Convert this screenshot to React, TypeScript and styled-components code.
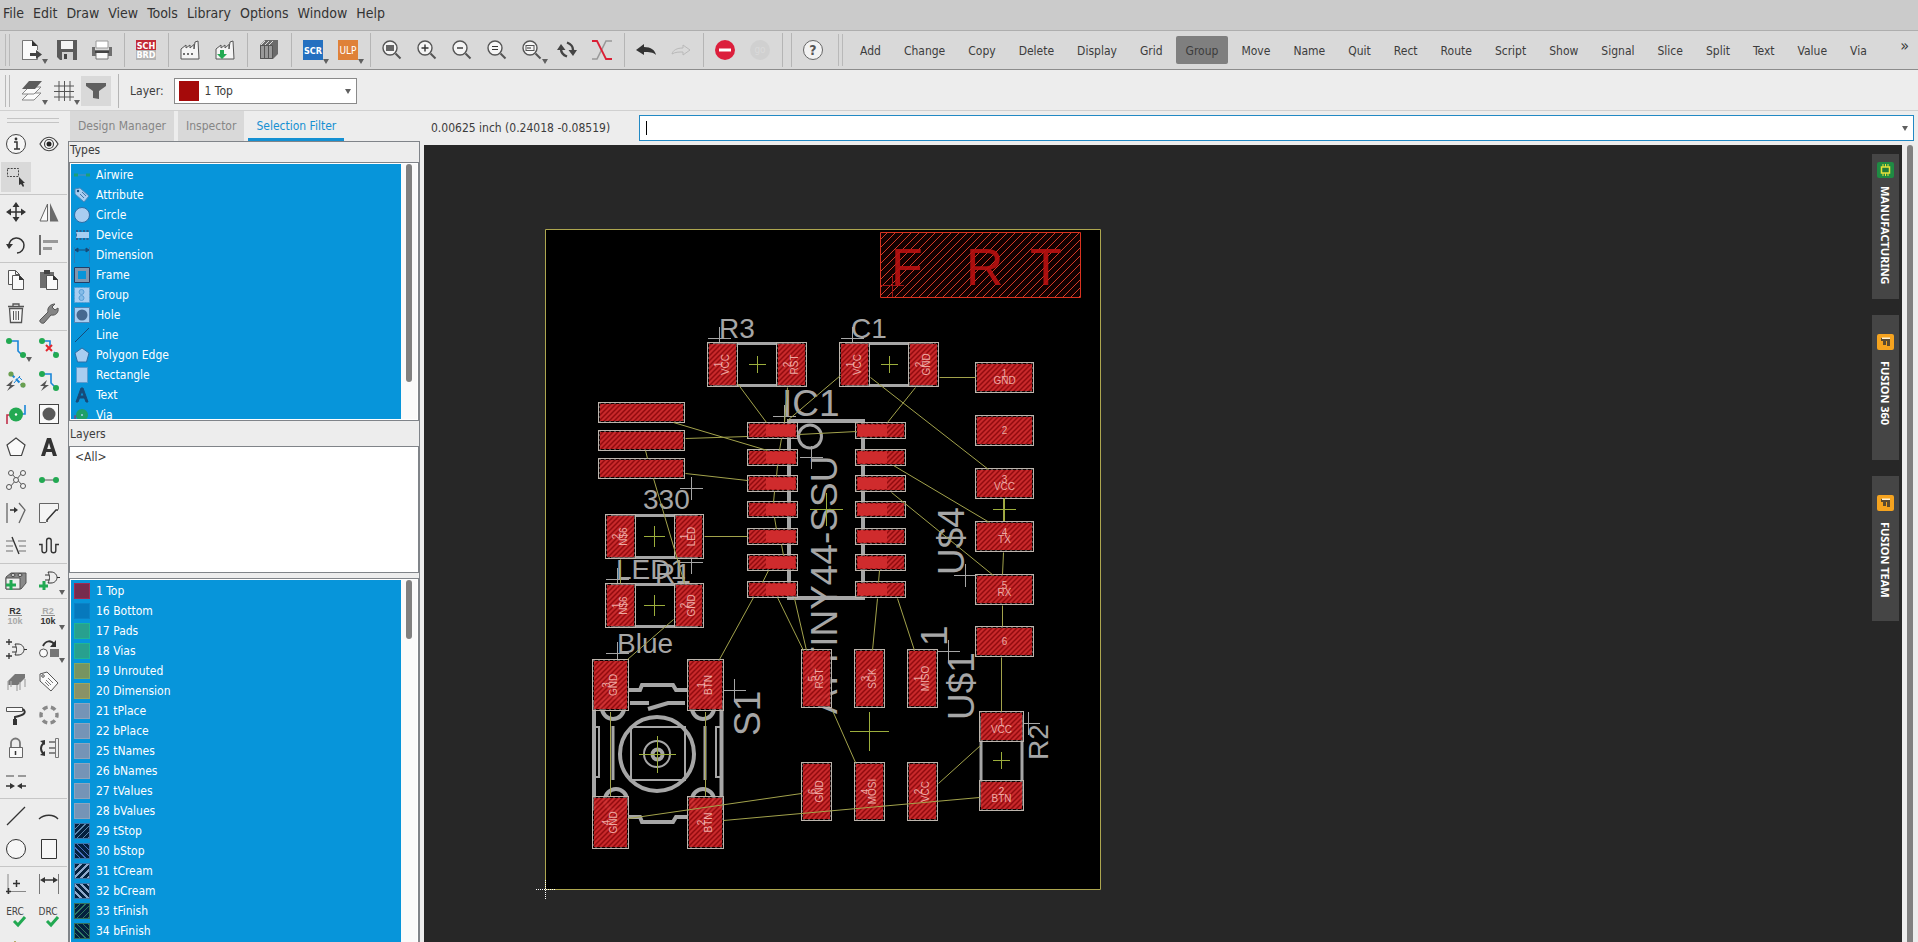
import React from "react";
import styled, { createGlobalStyle, css } from "styled-components";

const UI_FONT = '"DejaVu Sans Condensed", "Noto Sans", sans-serif';
const BOARD_FONT = '"Liberation Sans", Arial, sans-serif';

const GlobalStyle = createGlobalStyle`
  *, *::before, *::after { box-sizing: border-box; }
  body {
    margin: 0;
    background: #ededed;
    color: #3c3c3c;
    font: 12px/20px ${UI_FONT};
  }
  button, input, select { font: inherit; color: inherit; }
`;

/* ---------- shell ---------- */

const Shell = styled.div`
  display: flex;
  flex-direction: column;
  height: 100vh;
  overflow: hidden;
`;

const MenuBar = styled.nav`
  flex: none;
  height: 31px;
  padding: 0 0 4px;
  display: flex;
  background: #cbcbcb;
  border-bottom: 1px solid #aeaeae;
`;

const MenuItem = styled.button`
  border: 0;
  background: none;
  padding: 0 6px 0 3px;
  font-size: 14px;
  line-height: 26px;
  color: #333;
`;

const Toolbar = styled.div<{ $light?: boolean }>`
  flex: none;
  display: flex;
  align-items: center;
  height: ${(p) => (p.$light ? 41 : 39)}px;
  padding-top: ${(p) => (p.$light ? 2 : 0)}px;
  background: ${(p) => (p.$light ? "#ededed" : "#d9d9d9")};
  border-bottom: 1px solid ${(p) => (p.$light ? "#d0d0d0" : "#8c8c8c")};
`;

const Grip = styled.div<{ $wide?: boolean }>`
  flex: none;
  width: 5px;
  height: 32px;
  margin: 0 ${(p) => (p.$wide ? 7 : 12)}px 0 ${(p) => (p.$wide ? 15 : 5)}px;
  border: solid #b9b9b9;
  border-width: 0 1px;
`;

const ToolGroup = styled.div<{ $last?: boolean; $tight?: boolean }>`
  flex: none;
  display: flex;
  align-items: center;
  gap: ${(p) => (p.$tight ? 12 : 15)}px;
  height: 34px;
  padding-right: 12px;
  margin-right: ${(p) => (p.$last ? 8 : 11)}px;
  border-right: 1px solid #b5b5b5;
`;

const Divider = styled.div`
  flex: none;
  width: 1px;
  height: 34px;
  margin-right: 11px;
  background: #b5b5b5;
`;

const IconButton = styled.button<{ $pressed?: boolean }>`
  position: relative;
  flex: none;
  width: 20px;
  height: 20px;
  padding: 0;
  border: 0;
  background: none;
  color: #444;
  svg { display: block; overflow: visible; }
  ${(p) =>
    p.$pressed &&
    css`
      box-shadow: 0 0 0 5px #d9d9d9;
      background: #d9d9d9;
    `}
`;

const Caret = styled.i<{ $inline?: boolean }>`
  border: solid transparent;
  border-width: 5px 3px 0;
  border-top-color: #606060;
  ${(p) =>
    p.$inline
      ? css`flex: none; margin-right: 5px;`
      : css`position: absolute; right: -6px; bottom: -4px;`}
`;

const CommandRow = styled.div`
  flex: 1;
  min-width: 0;
  display: flex;
  gap: 3px;
  overflow: hidden;
`;

const Command = styled.button<{ $active?: boolean }>`
  flex: none;
  height: 28px;
  padding: 1px 10px 0;
  border: 0;
  border-radius: 2px;
  background: ${(p) => (p.$active ? "#7f7f7f" : "none")};
`;

const More = styled.button`
  align-self: flex-start;
  border: 0;
  background: none;
  padding: 5px 9px;
  font-size: 16px;
`;

const LayerLabel = styled.label`
  display: flex;
  align-items: center;
  gap: 10px;
`;

const LayerBox = styled.span`
  display: flex;
  align-items: center;
  width: 183px;
  height: 26px;
  padding-left: 4px;
  border: 1px solid #8a8a8a;
  background: #fff;
`;

const LayerSwatch = styled.span`
  width: 20px;
  height: 20px;
  background: #a50a0a;
`;

const LayerSelect = styled.select`
  flex: 1;
  appearance: none;
  border: 0;
  padding: 0 6px;
  background: none;
  outline: 0;
`;

/* ---------- workspace ---------- */

const Workspace = styled.div`
  flex: 1;
  min-height: 0;
  display: flex;
`;

const Rail = styled.div`
  flex: none;
  width: 67px;
  overflow: hidden;
`;

const RailGrip = styled.div`
  height: 5px;
  margin: 7px 8px 4px 7px;
  border: solid #c4c4c4;
  border-width: 1px 0;
`;

const RailRow = styled.div<{ $ruled?: boolean }>`
  display: flex;
  align-items: center;
  gap: 13px;
  height: ${(p) => (p.$ruled ? 35 : 33)}px;
  padding-left: 6px;
  ${(p) => p.$ruled && css`border-bottom: 1px solid #c6c6c6; padding-bottom: 1px;`}
`;

const Side = styled.section`
  flex: none;
  width: 352px;
  margin-left: 1px;
  display: flex;
  flex-direction: column;
`;

const TabList = styled.div`
  display: flex;
  gap: 4px;
  height: 30px;
  padding-left: 2px;
`;

const Tab = styled.button<{ $on?: boolean }>`
  border: 0;
  padding: 2px 8px 0;
  background: ${(p) => (p.$on ? "none" : "#d9d9d9")};
  color: ${(p) => (p.$on ? "#1590d2" : "#868686")};
  border-bottom: 3px solid ${(p) => (p.$on ? "#1590d2" : "#d9d9d9")};
`;

const Pane = styled.div`
  flex: 1;
  min-height: 0;
  display: flex;
  flex-direction: column;
  border: 1px solid #808489;
  border-bottom: 0;
`;

const PaneTitle = styled.h2<{ $tall?: boolean }>`
  flex: none;
  margin: 0;
  height: ${(p) => (p.$tall ? 25 : 20)}px;
  padding: 0 1px;
  font-size: 12px;
  font-weight: 400;
  line-height: ${(p) => (p.$tall ? 26 : 16)}px;
`;

const ListFrame = styled.div<{ $size?: number }>`
  flex: ${(p) => (p.$size ? "none" : "1")};
  height: ${(p) => (p.$size ? p.$size + "px" : "auto")};
  min-height: 0;
  display: flex;
  background: #fff;
  border: 1px solid #808489;
  padding: 1px;
  overflow: hidden;
  ${(p) => !p.$size && css`border-bottom: 0; padding-bottom: 0;`}
`;

const List = styled.ul`
  flex: 1;
  margin: 0;
  padding: 0;
  list-style: none;
  background: #0795da;
  color: #fff;
  overflow: hidden;
`;

const ListItem = styled.li`
  display: flex;
  align-items: center;
  gap: 6px;
  height: 20px;
  padding: 1px 0 0 3px;
`;

const PlainItem = styled.div`
  padding: 0 4px;
  line-height: 18px;
`;

const Track = styled.div`
  flex: none;
  width: 16px;
  padding-left: 5px;
  background: #fafafa;
`;

const Thumb = styled.div<{ $size: number }>`
  width: 6px;
  height: ${(p) => p.$size}px;
  border-radius: 3px;
  background: #808080;
`;

const Swatch = styled.span<{ $fill: string; $edge: string; $hatch?: string; $lean?: number; $line?: number }>`
  width: 16px;
  height: 16px;
  border: 1px solid ${(p) => p.$edge};
  background: ${(p) =>
    p.$hatch
      ? `repeating-linear-gradient(${p.$lean}deg, ${p.$fill} 0 3px, ${p.$hatch} 3px ${3 + (p.$line || 1)}px)`
      : p.$fill};
`;

const Gap = styled.div`
  flex: none;
  height: 5px;
`;

const Editor = styled.main`
  flex: 1;
  min-width: 0;
  margin-left: 4px;
  display: flex;
  flex-direction: column;
`;

const CommandLine = styled.div`
  flex: none;
  display: flex;
  align-items: center;
  height: 34px;
  padding: 0 4px 0 7px;
`;

const Coordinates = styled.output`
  flex: none;
  width: 208px;
`;

const CommandBox = styled.label`
  flex: 1;
  display: flex;
  align-items: center;
  height: 26px;
  padding-left: 6px;
  background: #fff;
  border: 1px solid #2289c4;
`;

const TextCursor = styled.i`
  width: 1px;
  height: 14px;
  background: #000;
`;

const CommandInput = styled.input`
  flex: 1;
  border: 0;
  outline: 0;
  background: none;
`;

const Stage = styled.div`
  flex: 1;
  min-height: 0;
  display: flex;
`;

const Canvas = styled.div`
  flex: 1;
  min-width: 0;
  display: flex;
  background: #272727;
`;

const BoardView = styled.div`
  flex: 1;
  min-width: 0;
  overflow: hidden;
  svg { display: block; width: 100%; height: 100%; }
`;

const Dock = styled.div`
  flex: none;
  width: 30px;
  padding: 9px 3px 0 0;
  display: flex;
  flex-direction: column;
  gap: 16px;
`;

const DockTab = styled.button<{ $long?: boolean }>`
  display: flex;
  align-items: center;
  gap: ${(p) => (p.$long ? 8 : 11)}px;
  height: 145px;
  width: 27px;
  padding: ${(p) => (p.$long ? 8 : 19)}px 0 0;
  border: 0;
  writing-mode: vertical-rl;
  background: #454545;
  color: #fff;
  font: 700 11px/27px "Noto Sans", sans-serif;
`;

const CanvasTrack = styled.div`
  flex: none;
  width: 16px;
  display: flex;
  justify-content: center;
`;

const CanvasThumb = styled.div`
  width: 6px;
  border-radius: 3px 3px 0 0;
  background: #808080;
`;

/* ---------- icons (20 x 20) ---------- */

const G = "#22a952";
const B = "#1a86d8";
const K = "#333";
const M = "#8c8c8c";

const lens = (inner: React.ReactNode) => (
  <>
    <circle cx="8" cy="8" r="7" fill="#f5f5f5" stroke="#555" strokeWidth="1.4" />
    <path d="M13.5 13.5 18.5 18.5" stroke="#555" strokeWidth="2" />
    {inner}
  </>
);
const factory = (
  <path d="M1 19V9l5-4v3l4-3v3l4-3.500V9L15 2l3-1 1 18Z" fill="#f4f4f4" stroke="#555" />
);
const gate = (x: number, y: number) => (
  <g transform={`translate(${x} ${y})`} fill="none" stroke={K}>
    <path d="M3 0h3c4 0 6 3 6 5.500s-2 5.500-6 5.500H3c2-4 2-7 0-11ZM0 3h4M0 8h4M12 5.500h3" />
  </g>
);
const sheet = (x: number, y: number) => (
  <path transform={`translate(${x} ${y})`} d="M.5.5h7l4 4v10H.5ZM7.500.5v4h4" fill="#fafafa" stroke="#555" />
);
const via = (
  <>
    <path d="M1 20V11h6" fill="none" stroke="#c0304a" strokeWidth="1.6" />
    <path d="M14 10h5V1" fill="none" stroke={B} strokeWidth="1.6" />
    <circle cx="10" cy="10.500" r="7" fill={G} />
    <circle cx="10" cy="10.500" r="1.200" fill="#fff" />
  </>
);
const tag = (
  <path d="M1 2 8 0 19 11 12 19 1 9Z" fill="#fafafa" stroke="#555" />
);
const small = (a: string, b: string, ca: string, cb: string) => (
  <g fontFamily={BOARD_FONT} fontWeight="700" fontSize="9" textAnchor="middle">
    <text x="9" y="8" fill={ca}>{a}</text>
    <text x="9" y="18" fill={cb}>{b}</text>
    <path d="M2 9.500h14" stroke={M} />
  </g>
);
const check = (label: string) => (
  <>
    <text x="9" y="8" fontFamily={UI_FONT} fontSize="10" textAnchor="middle" fill="#444">{label}</text>
    <path d="m8 14 4 4 7-8" fill="none" stroke={G} strokeWidth="3" />
  </>
);

const icons: Record<string, React.ReactNode> = {
  open: (
    <>
      <path d="M.5.5h10l5 5V20H.5Z" fill="#fafafa" />
      <path d="M.5 20V.5h10M15.500 10V6M.5 19.500h15V17" fill="none" stroke="#777" />
      <path d="M10 0v6h6Z" fill={K} />
      <path d="M8 13h6v-3l6 4.500-6 4.500v-3H8Z" fill="#444" />
    </>
  ),
  save: (
    <>
      <path d="M0 0h20v20H3l-3-3Z" fill="#5a5a5a" />
      <path d="M4 1h12v8H4Z" fill="#f4f4f4" />
      <path d="M5 12h11v8H5Z" fill="#d0d0d0" />
      <path d="M7 14h3v5H7Z" fill="#444" />
    </>
  ),
  print: (
    <>
      <path d="M4 1h12v7H4Z" fill="#fff" stroke="#999" />
      <path d="M0 7h3v3h14V7h3v9H0Z" fill="#6f6f6f" />
      <path d="M4 12h12v7H4Z" fill="#fafafa" stroke="#777" />
      <path d="M3 11h14v2H3Z" fill="#444" />
    </>
  ),
  schbrd: (
    <>
      <path d="M0 0h20v10H0Z" fill="#c22a36" />
      <path d="M0 10h20v10H0Z" fill="#b3b3b3" />
      <g fontFamily={UI_FONT} fontWeight="700" fontSize="9" fill="#fff" textAnchor="middle">
        <text x="10" y="9">SCH</text>
        <text x="10" y="18">BRD</text>
      </g>
    </>
  ),
  cam: <>{factory}<path d="M3 14h2m2 0h2m2 0h2" stroke="#444" strokeWidth="1.500" /></>,
  camOut: <>{factory}<path d="M5 10h4v4h3l-5 5-5-5h3Z" fill={G} /></>,
  library: (
    <>
      <path d="M1 5 6 0h13v14l-5 5H1Z" fill="#6a6a6a" />
      <path d="M1.500 5.500h4v13h-4ZM5.500 5.500h4v13h-4ZM9.500 5.500h4v13h-4Z" fill="#999" stroke="#555" />
      <path d="m2 5 4-4m0 4 4-4m0 4 4-4" stroke="#ddd" />
    </>
  ),
  scr: (
    <>
      <path d="M0 0h20v20H0Z" fill="#2470c0" />
      <text x="10" y="14" fontFamily={UI_FONT} fontWeight="700" fontSize="9" fill="#fff" textAnchor="middle">SCR</text>
    </>
  ),
  ulp: (
    <>
      <path d="M0 0h20v20H0Z" fill="#df8138" />
      <text x="10" y="14" fontFamily={UI_FONT} fontSize="10" fill="#fff" textAnchor="middle">ULP</text>
    </>
  ),
  zoomFit: lens(<rect x="4" y="5" width="8" height="6" fill="#666" />),
  zoomIn: lens(<path d="M4.500 8h7M8 4.500v7" stroke={K} strokeWidth="1.400" />),
  zoomOut: lens(<path d="M5 8h6" stroke={K} strokeWidth="1.400" />),
  redraw: lens(<path d="M5 6.500h6M5 9.500h6" stroke={K} strokeWidth="1.200" />),
  zoomSelect: lens(<><rect x="4" y="5.500" width="8" height="5" fill="none" stroke="#555" /><path d="M5 8h4" stroke={K} /></>),
  refresh: (
    <>
      <path d="M4 9c0 4 2 6 6 7.500M16 10c0-4-2-6-6-7.500" fill="none" stroke="#444" strokeWidth="2.400" />
      <path d="M0 10l4-6 4.500 6ZM11.500 10H20l-4 6Z" fill="#444" />
    </>
  ),
  ratsnest: (
    <>
      <path d="M0 19h5l9-18h6" fill="none" stroke="#999" strokeWidth="1.600" />
      <path d="M0 1h5l9 18h6" fill="none" stroke="#da1f35" strokeWidth="1.800" />
    </>
  ),
  undo: <path d="M0 10 8 4v3c7 0 11 3 12 8-3-3-7-3-12-3v3Z" fill={K} />,
  redo: <path d="M19 10 12 5v3C6 8 2 10 1 14c3-2 7-2 11-2v3Z" fill="none" stroke="#b9b9b9" />,
  stop: <><circle cx="10" cy="10" r="10" fill="#dc1f3c" /><path d="M4 10h12" stroke="#fff" strokeWidth="3" /></>,
  go: (
    <>
      <circle cx="10" cy="10" r="10" fill="#d0d0d0" />
      <text x="10" y="13" fontFamily={UI_FONT} fontSize="10" fill="#dadada" textAnchor="middle">go</text>
    </>
  ),
  help: (
    <>
      <circle cx="10" cy="10" r="9.500" fill="#f2f2f2" stroke="#666" />
      <text x="10" y="15" fontFamily={UI_FONT} fontWeight="700" fontSize="14" fill="#555" textAnchor="middle">?</text>
    </>
  ),
  layers: (
    <>
      <path d="M0 19 7 12h12l-7 7Z" fill="#fafafa" stroke="#888" />
      <path d="m0 13 7-7h12l-7 7Z" fill="#fafafa" stroke="#888" />
      <path d="m0 8 7-8h13l-7 8Z" fill="#5c5c5c" />
    </>
  ),
  grid: <path d="M5 0v20M10.500 0v20M16 0v20M0 5h20M0 10.500h20M0 16h20" stroke="#555" />,
  filter: <path d="M0 2h20v3l-7 5v8l-6-1v-7L0 5Z" fill="#606060" />,

  info: (
    <>
      <circle cx="10" cy="10" r="9.500" fill="#f6f6f6" stroke="#444" />
      <path d="M8 8h3v7m-3 0h6" fill="none" stroke={K} strokeWidth="1.500" />
      <circle cx="10" cy="5" r="1.400" fill={K} />
    </>
  ),
  show: (
    <>
      <path d="M1 10c5-9 13-9 18 0-5 9-13 9-18 0Z" fill="#f6f6f6" stroke="#444" strokeWidth="1.200" />
      <circle cx="10" cy="10" r="4.500" fill="none" stroke="#444" strokeWidth="1.200" />
      <circle cx="10" cy="10" r="2.500" fill="#222" />
    </>
  ),
  group: (
    <>
      <rect x="1.500" y="1.500" width="11" height="8" fill="none" stroke="#444" strokeDasharray="2 1.200" />
      <path d="M13 10v8l2-1 2 3 1-1-1-3h2Z" fill={K} />
    </>
  ),
  move: (
    <>
      <path d="M10 3v14M3 10h14" stroke={K} strokeWidth="1.500" />
      <path d="M10 0 6.500 5h7ZM10 20l-3.500-5h7ZM0 10l5-3.500v7ZM20 10l-5-3.500v7Z" fill={K} />
    </>
  ),
  mirror: (
    <>
      <path d="M8.500 2v17H1Z" fill="#fafafa" stroke="#666" />
      <path d="M11 1v18.500h8.500Z" fill="#6a6a6a" />
    </>
  ),
  rotate: (
    <>
      <path d="M3 11a7.500 7.500 0 1 1 8 7" fill="none" stroke={K} strokeWidth="1.500" />
      <path d="M0 9h7l-4 5Z" fill={K} />
    </>
  ),
  align: (
    <>
      <path d="M1 0v20" stroke="#444" strokeWidth="1.500" />
      <path d="M4 5h15v3H4ZM4 12h9v3H4Z" fill="#999" />
    </>
  ),
  copy: <>{sheet(2, 0)}{sheet(6, 5)}<path d="M13 5v5h5Z" fill={K} /></>,
  paste: (
    <>
      <path d="M1 2h14v16H1Z" fill="#6e6e6e" />
      <path d="M5 0h6v4H5Z" fill="#444" />
      {sheet(7, 5)}
      <path d="M14 5v5h5Z" fill={K} />
    </>
  ),
  trash: (
    <>
      <path d="M3.500 5.500h13l-1 14h-11ZM7 3V1h6v2M2 3.500h16" fill="#f4f4f4" stroke="#555" strokeWidth="1.300" />
      <path d="M7.500 8v9M10 8v9M12.500 8v9" stroke="#555" />
    </>
  ),
  wrench: <path d="M1 17 9 9c-1-4 2-8 7-8l-3 3 3 3 3-2c1 4-2 8-7 7l-7 8c-2 1-5-1-4-3Z" fill="#858585" stroke="#555" />,
  route: (
    <>
      <path d="M3 3h9v10l5 5" fill="none" stroke={B} strokeWidth="1.600" />
      <circle cx="3" cy="3" r="3" fill={G} /><circle cx="17" cy="17" r="3" fill={G} />
    </>
  ),
  ripup: (
    <>
      <path d="M3 3h8v5m4 6 3 3" fill="none" stroke={B} strokeWidth="1.600" />
      <circle cx="3" cy="3" r="3" fill={G} /><circle cx="17" cy="17" r="3" fill={G} />
      <path d="m7 7 6 6m0-6-6 6" stroke="#e2262e" strokeWidth="2" />
    </>
  ),
  fanout: (
    <>
      <path d="M5 3 18 16" stroke={B} strokeDasharray="5 2" strokeWidth="2" />
      <path d="m14 5-6 7m5-6 3 3" stroke={B} />
      <circle cx="5" cy="3" r="2.600" fill="#6a9f50" /><circle cx="17" cy="14" r="2.600" fill="#6a9f50" />
      <path d="M7 9 0 15h4l-3 5 8-6H5Z" fill="#555" />
    </>
  ),
  autoroute: (
    <>
      <path d="M3 3h9v9l5 5" fill="none" stroke={B} strokeWidth="1.600" />
      <circle cx="3" cy="3" r="3" fill={G} /><circle cx="17" cy="17" r="3" fill={G} />
      <path d="M8 9 1 15h4l-3 5 8-6H6Z" fill="#555" />
    </>
  ),
  via,
  hole: <><rect x=".5" y=".5" width="19" height="19" fill="#fafafa" stroke="#444" /><circle cx="10" cy="10" r="6.500" fill="#5a5a5a" /></>,
  polygon: <path d="M10 1 19 8 15.500 18.500H4.500L1 8Z" fill="#fafafa" stroke="#444" strokeWidth="1.200" />,
  text: <path d="M2 19 8 1h4l6 18h-4l-1.200-4H7.200L6 19Zm6.200-7h3.600L10 6Z" fill={K} fillRule="evenodd" />,
  net: (
    <>
      <path d="m5 3 12 13M16 3 4 17" stroke="#555" />
      <g fill="#f4f4f4" stroke="#555"><circle cx="5" cy="3" r="2.500" /><circle cx="17" cy="3" r="2.500" /><circle cx="3" cy="17" r="2.500" /><circle cx="17" cy="16" r="2.500" /><circle cx="10" cy="10" r="2.500" /></g>
    </>
  ),
  airwire: (
    <>
      <path d="M3 10h14" stroke="#888" strokeWidth="1.500" />
      <circle cx="3" cy="10" r="3" fill={G} /><circle cx="17" cy="10" r="3" fill={G} />
    </>
  ),
  split: (
    <>
      <path d="M1 0v20M13 0l6 7-6 13" fill="none" stroke="#666" strokeWidth="1.300" />
      <path d="M4 7h5" stroke={K} strokeWidth="1.500" /><path d="M8 4v6l4-3Z" fill={K} />
    </>
  ),
  miter: (
    <>
      <path d="M7 19.500H.5V.5h19v6" fill="#f4f4f4" stroke="#666" />
      <path d="M19 7h-2L8 17v2" fill="none" stroke={K} strokeWidth="1.500" />
    </>
  ),
  slice: (
    <>
      <path d="M0 5h7m5 0h8M0 10h7m6 0h7M0 15h7m6 0h7" stroke="#999" strokeWidth="1.300" />
      <path d="m6 1 7 17" stroke={K} strokeWidth="1.400" />
    </>
  ),
  meander: <path d="M0 8.500h3v6a2.300 2.300 0 0 0 4.600 0v-10a2.200 2.200 0 0 1 4.600 0v10a2.300 2.300 0 0 0 4.600 0v-6H20" fill="none" stroke={K} strokeWidth="1.400" />,
  addPart: (
    <>
      <path d="M0 6 5 2h15v10l-5 6H0Z" fill="#8a8a8a" stroke="#555" />
      <path d="M0 7h14v11H0Z" fill="#eee" stroke="#555" />
      <g fill="#ddd" stroke="#444"><ellipse cx="7" cy="4" rx="2" ry="1.500" /><ellipse cx="14" cy="4" rx="2" ry="1.500" /></g>
      <path d="M5 9v10M0 14h10" stroke={G} strokeWidth="3" />
    </>
  ),
  addGate: <>{gate(6, 1)}<path d="M5 10v9M0 15h9" stroke={G} strokeWidth="3" /></>,
  name: small("R2", "10k", K, "#aaa"),
  value: small("R2", "10k", "#aaa", K),
  invoke: <>{gate(6, 5)}<path d="M3 0v6M0 3h6M3 14v6M0 17h6" stroke={K} strokeWidth="1.300" /></>,
  replace: (
    <>
      <circle cx="4.500" cy="14" r="4" fill="#fafafa" stroke="#555" />
      <path d="M11 10h9v8h-9Z" fill="#777" />
      <path d="M4 7c3-6 8-6 12-1" fill="none" stroke={K} strokeWidth="2" /><path d="m17 1 0 7h-6Z" fill={K} />
    </>
  ),
  array: (
    <>
      <path d="M2 9 9 2h10v4l-7 7H2Z" fill="#777" />
      <path d="M2 9v9m3-9v6m6-2v6m3-9v8m5-11v8" stroke="#aaa" strokeWidth="1.300" />
    </>
  ),
  attribute: <>{tag}<circle cx="4" cy="4" r="1.300" fill="none" stroke="#555" /><path d="m7 8 5 5M9 6l5 5m-8-1 4 4" stroke="#777" /></>,
  paint: (
    <>
      <path d="M.5 2.500h16v4H.5Z" fill="#fafafa" stroke="#555" />
      <path d="M17 4c4 4 1 6-8 8v2" fill="none" stroke={K} strokeWidth="2" />
      <path d="M7 14h4v6H7Z" fill={K} />
    </>
  ),
  ring: <circle cx="10" cy="10" r="8" fill="none" stroke="#888" strokeWidth="3.400" strokeDasharray="5 3.380" strokeDashoffset="2.500" />,
  lock: (
    <>
      <path d="M5 9V5a4.500 4.500 0 0 1 9 0v4" fill="none" stroke="#777" strokeWidth="1.800" />
      <path d="M3.500 9.500h13v10h-13Z" fill="#f8f8f8" stroke="#666" /><path d="M9.500 13v4" stroke={K} strokeWidth="1.500" />
    </>
  ),
  swap: (
    <>
      <path d="M5 5c-4 3-4 8 0 11" fill="none" stroke={K} strokeWidth="2" />
      <path d="M1 3 6 2v5ZM1 17l5 1v-5Z" fill={K} />
      <path d="M16.500.5h3v19h-3Z" fill="#eee" stroke="#777" /><path d="M10 4h6m-6 6h6m-6 5h6" stroke="#666" strokeWidth="1.500" />
    </>
  ),
  optimize: (
    <>
      <path d="M0 5h8m4 0h8" stroke="#999" strokeWidth="2" />
      <path d="M0 15h5m15 0h-5" stroke={K} strokeWidth="1.500" /><path d="m4 12 5 3-5 3Zm12 0-5 3 5 3Z" fill={K} />
    </>
  ),
  line: <path d="M1 19 19 1" stroke={K} strokeWidth="1.300" />,
  arc: <path d="M0 13c5-5 15-5 19 0" fill="none" stroke={K} strokeWidth="1.300" />,
  circle: <circle cx="10" cy="10" r="9.500" fill="#f6f6f6" stroke={K} />,
  rect: <path d="M2.500.5h15v19h-15Z" fill="#f6f6f6" stroke={K} />,
  mark: (
    <>
      <path d="M2 0v20M0 17.500h20" stroke="#888" /><path d="M10.500 6v7M7 9.500h7M2.500 14v6M0 17.500h5" stroke={K} strokeWidth="1.500" />
    </>
  ),
  dimension: (
    <>
      <path d="M.5 0v20M19.500 0v20" stroke="#777" /><path d="M3 6h14" stroke={K} strokeWidth="1.500" />
      <path d="m1 6 5-3v6Zm18 0-5-3v6Z" fill={K} />
    </>
  ),
  erc: check("ERC"),
  drc: check("DRC"),
  errors: <path d="m9 1 9 17H0Z" fill="#e8dc9a" stroke="#a89a50" />,
};

const Icon = ({ name }: { name: string }) => (
  <svg width="20" height="20" viewBox="0 0 20 20" aria-hidden="true">{icons[name]}</svg>
);

type ToolProps = { name: string; label: string; menu?: boolean; pressed?: boolean };
const Tool = ({ name, label, menu, pressed }: ToolProps) => (
  <IconButton aria-label={label} $pressed={pressed}>
    <Icon name={name} />
    {menu && <Caret />}
  </IconButton>
);

/* icons of the type list (16 x 16), tinted by the selection */
const L = "#a9cdf0";
const D = "#174a78";
const typeIcons: Record<string, React.ReactNode> = {
  Airwire: <><path d="M2 8h12" stroke="#3f8fc0" strokeWidth="1.500" /><path d="M0 8h4M12 8h4" stroke="#1b9f78" strokeWidth="3" /></>,
  Attribute: <><path d="M1 2 6 1 15 9l-5 6L1 7Z" fill={L} stroke="#4a88bb" /><circle cx="4" cy="4" r="1.200" fill={D} /><path d="m6 7 4 4M8 5l4 4" stroke="#4477a5" /></>,
  Circle: <circle cx="8" cy="8" r="7.500" fill={L} stroke="#2b6ea6" />,
  Device: <><path d="M3 3v10M6.500 3v10M10 3v10M13.500 3v10" stroke="#2b5f90" strokeWidth="2" /><path d="M2 5h13v6H2l1-3Z" fill={L} /></>,
  Dimension: <><path d="M.5 0v16M15.500 0v16" stroke="#2b7cb5" /><path d="M3 3h10M1 3l3-2v4Zm14 0-3-2v4Z" fill={D} stroke={D} /></>,
  Frame: <><path d="M2 2h12v12H2Z" fill="none" stroke="#8296ae" strokeWidth="4" /><path d="M.5.5h15v15H.5Z" fill="none" stroke="#223e66" /></>,
  Group: <><path d="M.5.5h15v15H.5Z" fill={L} stroke="#5a9cd0" strokeDasharray="2 1" /><circle cx="7.500" cy="5" r="2.500" fill="#86bce8" stroke="#5a9fd6" /><circle cx="7.500" cy="11" r="2.500" fill="#86bce8" stroke="#5a9fd6" /></>,
  Hole: <><path d="M.5.5h15v15H.5Z" fill={L} stroke="#4e83b4" /><circle cx="8" cy="8" r="5.500" fill="#46688f" /></>,
  Line: <path d="M1 15 15 1" stroke={D} />,
  "Polygon Edge": <path d="m8 1 7 5-2.500 9h-9L1 6Z" fill={L} stroke="#2b6ea6" />,
  Rectangle: <path d="M2.500.5h11v15h-11Z" fill={L} stroke="#5a9cd0" />,
  Text: <path d="M2 15 7 1h2l5 14h-2l-1.500-4h-5L4 15Zm4-6h4L8 4Z" fill={D} fillRule="evenodd" stroke={D} />,
  Via: <><path d="M1 16V9h4" fill="none" stroke="#7b4a80" strokeWidth="1.500" /><circle cx="8" cy="8" r="6" fill="#1f9f68" /><circle cx="8" cy="8" r="1" fill={L} /></>,
};

/* ---------- data ---------- */

const menus = ["File", "Edit", "Draw", "View", "Tools", "Library", "Options", "Window", "Help"];

const toolGroups: ToolProps[][] = [
  [
    { name: "open", label: "Open", menu: true },
    { name: "save", label: "Save" },
    { name: "print", label: "Print" },
  ],
  [{ name: "schbrd", label: "Switch to schematic" }],
  [
    { name: "cam", label: "CAM processor" },
    { name: "camOut", label: "Export manufacturing data" },
  ],
  [{ name: "library", label: "Library manager" }],
  [
    { name: "scr", label: "Run script", menu: true },
    { name: "ulp", label: "Run ULP", menu: true },
  ],
  [
    { name: "zoomFit", label: "Zoom to fit" },
    { name: "zoomIn", label: "Zoom in" },
    { name: "zoomOut", label: "Zoom out" },
    { name: "redraw", label: "Redraw" },
    { name: "zoomSelect", label: "Zoom to selection", menu: true },
    { name: "refresh", label: "Refresh" },
    { name: "ratsnest", label: "Ratsnest" },
  ],
  [
    { name: "undo", label: "Undo" },
    { name: "redo", label: "Redo" },
  ],
  [
    { name: "stop", label: "Stop" },
    { name: "go", label: "Go" },
  ],
];

const commands = [
  "Add", "Change", "Copy", "Delete", "Display", "Grid", "Group", "Move", "Name", "Quit", "Rect",
  "Route", "Script", "Show", "Signal", "Slice", "Split", "Text", "Value", "Via",
];

type RailLine = { tools: string[]; ruled?: boolean; menus?: string[] };
const rail: RailLine[] = [
  { tools: ["info", "show"] },
  { tools: ["group"], ruled: true },
  { tools: ["move", "mirror"] },
  { tools: ["rotate", "align"], ruled: true },
  { tools: ["copy", "paste"] },
  { tools: ["trash", "wrench"], ruled: true },
  { tools: ["route", "ripup"], menus: ["route"] },
  { tools: ["fanout", "autoroute"] },
  { tools: ["via", "hole"] },
  { tools: ["polygon", "text"] },
  { tools: ["net", "airwire"] },
  { tools: ["split", "miter"] },
  { tools: ["slice", "meander"], ruled: true },
  { tools: ["addPart", "addGate"], ruled: true, menus: ["addGate"] },
  { tools: ["name", "value"], menus: ["value"] },
  { tools: ["invoke", "replace"], menus: ["replace"] },
  { tools: ["array", "attribute"] },
  { tools: ["paint", "ring"] },
  { tools: ["lock", "swap"] },
  { tools: ["optimize"], ruled: true },
  { tools: ["line", "arc"] },
  { tools: ["circle", "rect"], ruled: true },
  { tools: ["mark", "dimension"] },
  { tools: ["erc", "drc"] },
  { tools: ["errors"] },
];

type Layer = { label: string; fill: string; edge: string; hatch?: string; lean?: number; line?: number };
const slate = { fill: "#7594b6", edge: "#8ba5be" };
const layers: Layer[] = [
  { label: "1 Top", fill: "#772b4d", edge: "#a02a55" },
  { label: "16 Bottom", fill: "#0679bd", edge: "#0b82c6" },
  { label: "17 Pads", fill: "#28a08e", edge: "#1fb596" },
  { label: "18 Vias", fill: "#28a08e", edge: "#1fb596" },
  { label: "19 Unrouted", fill: "#779460", edge: "#7fa866" },
  { label: "20 Dimension", fill: "#8a9266", edge: "#9ba562" },
  { label: "21 tPlace", ...slate },
  { label: "22 bPlace", ...slate },
  { label: "25 tNames", ...slate },
  { label: "26 bNames", ...slate },
  { label: "27 tValues", ...slate },
  { label: "28 bValues", ...slate },
  { label: "29 tStop", fill: "#04213f", edge: "#3d75a8", hatch: "#5f88ad", lean: 135 },
  { label: "30 bStop", fill: "#04213f", edge: "#3d75a8", hatch: "#4a6fc0", lean: 45 },
  { label: "31 tCream", fill: "#04213f", edge: "#3d75a8", hatch: "#8fa9cc", lean: 135, line: 2 },
  { label: "32 bCream", fill: "#04213f", edge: "#3d75a8", hatch: "#8fa9cc", lean: 45, line: 2 },
  { label: "33 tFinish", fill: "#04213f", edge: "#356f5c", hatch: "#2f7a64", lean: 135 },
  { label: "34 bFinish", fill: "#04213f", edge: "#356f5c", hatch: "#2f7a64", lean: 45 },
];

/* ---------- board drawing, in screen units of the editor window ---------- */

const SILK = "#a6a6a6";
const WIRE = "#a3a34c";

type PadProps = { x: number; y: number; w: number; h: number; n?: string; net?: string; turned?: boolean };
const Pad = ({ x, y, w, h, n, net, turned }: PadProps) => {
  const cx = x + w / 2;
  const cy = y + h / 2;
  return (
    <g>
      <rect x={x + 0.5} y={y + 0.5} width={w - 1} height={h - 1} fill="#200" fillOpacity="0.5" stroke="#bdb5ad" />
      <rect x={x + 2} y={y + 2} width={w - 4} height={h - 4} fill="url(#copper)" fillOpacity="0.9" />
      <rect x={x + 1.5} y={y + 1.5} width={w - 3} height={h - 3} fill="none" stroke="#8c8c8c" strokeDasharray="1 4" />
      <g transform={turned ? `translate(${cx} ${cy}) rotate(-90)` : `translate(${cx} ${cy})`} fill="#eda9a4" fontSize="10" textAnchor="middle">
        {n && <text y={net ? -1 : 3}>{n}</text>}
        {net && <text y="6">{net}</text>}
      </g>
    </g>
  );
};

const Cross = ({ x, y, r = 11, color = SILK }: { x: number; y: number; r?: number; color?: string }) => (
  <path d={`M${x - r} ${y + 0.5}h${2 * r + 1}M${x + 0.5} ${y - r}v${2 * r + 1}`} stroke={color} />
);

const Silk = ({ x, y, size, turned, children }: { x: number; y: number; size: number; turned?: boolean; children: string }) => (
  <text transform={`translate(${x} ${y})${turned ? " rotate(-90)" : ""}`} fontSize={size} fill={SILK}>{children}</text>
);

const wires: number[][] = [
  [737, 383, 766, 422], [787, 387, 784, 422], [840, 375, 787, 420], [915, 387, 887, 422],
  [939, 377, 975, 377], [870, 377, 988, 469], [893, 465, 989, 522], [891, 492, 993, 575],
  [798, 434, 856, 431], [673, 422, 767, 450], [685, 438, 747, 436], [685, 473, 747, 480],
  [645, 450, 647, 458], [653, 478, 684, 583], [704, 536, 747, 536], [620, 559, 620, 583],
  [673, 619, 627, 659], [1003, 552, 1002, 574], [1002, 605, 1002, 626], [1001, 657, 1001, 711],
  [980, 745, 938, 783], [979, 797, 723, 820], [628, 818, 801, 793], [832, 710, 855, 762],
  [877, 598, 872, 650], [879, 570, 878, 582], [897, 598, 914, 650], [753, 597, 719, 659],
  [768, 570, 762, 582], [777, 597, 803, 650], [794, 598, 806, 650], [781, 438, 779, 450],
  [777, 465, 776, 476], [774, 491, 773, 502], [774, 517, 776, 529], [781, 544, 783, 555],
];
const pinRows = [422, 449, 475, 501, 528, 554, 581];
const edgePads: [number, string, string?][] = [
  [362, "1", "GND"], [415, "2"], [468, "3", "VCC"], [521, "4", "TX"], [574, "5", "RX"], [626, "6"],
];

const Board = () => (
  <svg role="img" aria-label="Board layout">
    <defs>
      <pattern id="copper" width="5" height="5" patternUnits="userSpaceOnUse">
        <path d="M0 0h5v5H0Z" fill="#dc2e30" />
        <path d="M-1 1 1-1M-1 6 6-1M4 6 6 4" stroke="#a00c10" strokeWidth="1.500" />
      </pattern>
      <pattern id="hatch" width="8" height="8" patternUnits="userSpaceOnUse">
        <path d="M-1 1 1-1M-1 9 9-1M7 9 9 7" stroke="#d43a26" />
      </pattern>
    </defs>
    <g transform="translate(-424 -145)" fontFamily={BOARD_FONT} fill="none">
      <path d="M545.500 229.500h555v660h-555Z" fill="#000" stroke="#ada64f" />
      <path d="M536 889.500h20M545.500 880v20" stroke="#fff" strokeDasharray="1 1" />

      <path d="M880.500 232.500h200v65h-200Z" fill="#120000" />
      <path d="M880.500 232.500h200v65h-200Z" fill="url(#hatch)" stroke="#d8321f" />
      <g fontSize="52" fill="#bb1010" fillOpacity="0.9">
        <text x="891" y="285">F</text>
        <text x="966" y="285">R</text>
        <text x="1030" y="285">T</text>
      </g>
      <Cross x={892} y={285} color="#a01414" />

      <g stroke={SILK} strokeWidth="3">
        <path d="M713 343.500h88M713 385.500h88M845 343.500h88M845 385.500h88M611 515.500h87M611 557.500h87M611 584.500h87M611 626.500h87M981 717v88M1022 717v88" />
      </g>
      <path d="M789 421h74v177h-74Z" stroke={SILK} strokeWidth="4" />
      <circle cx="810" cy="436.500" r="11.500" stroke={SILK} strokeWidth="3" />

      <g stroke={SILK} strokeWidth="4">
        <path d="M594 700v110M721.500 700v110" />
        <path d="M628 690h12l2-5h31l3 5h12M628 817h12l2 5h31l3-5h12" />
        <path d="M630 703h19M648 709l20-6h17" />
        <circle cx="613" cy="708" r="11" /><circle cx="703" cy="708" r="11" />
        <circle cx="616" cy="800" r="11" /><circle cx="703" cy="800" r="11" />
        <circle cx="657" cy="754" r="37" />
        <circle cx="657.500" cy="754.500" r="5" />
      </g>
      <g stroke={SILK} strokeWidth="2">
        <path d="M631 727h54v53h-54ZM595 727h4v50h-4ZM716 727h5v50h-5Z" />
        <circle cx="657" cy="754" r="13" />
        <path d="M613 726v54M705 726v54" strokeWidth="3" />
      </g>

      <g>
        <Silk x={719} y={338} size={28}>R3</Silk>
        <Silk x={851} y={338} size={28}>C1</Silk>
        <Silk x={782} y={416} size={37}>IC1</Silk>
        <Silk x={643} y={509} size={28}>330</Silk>
        <Silk x={616} y={579} size={28}>LED1</Silk>
        <Silk x={655} y={583} size={28}>R1</Silk>
        <Silk x={617} y={653} size={28}>Blue</Silk>
        <Silk x={837} y={714} size={37} turned>ATTINY44-SSU</Silk>
        <Silk x={964} y={575} size={37} turned>U$4</Silk>
        <Silk x={947} y={646} size={37} turned>1</Silk>
        <Silk x={974} y={720} size={37} turned>U$1</Silk>
        <Silk x={760} y={736} size={37} turned>S1</Silk>
        <Silk x={1048} y={760} size={28} turned>R2</Silk>
      </g>

      {[
        [719, 338], [852, 338], [784, 416], [811, 457], [691, 488], [617, 579], [691, 562], [617, 653],
        [965, 575], [948, 651], [734, 690], [1028, 723],
      ].map(([x, y]) => <Cross key={`${x}-${y}`} x={x} y={y} />)}

      <Pad x={707} y={342} w={31} h={45} n="1" net="VCC" turned />
      <Pad x={776} y={342} w={31} h={45} n="2" net="RST" turned />
      <Pad x={839} y={342} w={31} h={45} n="1" net="VCC" turned />
      <Pad x={908} y={342} w={31} h={45} n="2" net="GND" turned />
      <Pad x={598} y={402} w={87} h={21} />
      <Pad x={598} y={430} w={87} h={21} />
      <Pad x={598} y={458} w={87} h={21} />
      <Pad x={605} y={514} w={31} h={45} n="2" net="N$6" turned />
      <Pad x={674} y={514} w={30} h={45} n="1" net="LED" turned />
      <Pad x={605} y={583} w={31} h={45} n="1" net="N$6" turned />
      <Pad x={674} y={583} w={30} h={45} n="2" net="GND" turned />
      {pinRows.map((y) => (
        <g key={y}>
          <Pad x={747} y={y} w={51} h={17} />
          <path d={`M766 ${y + 3}h29v11h-29Z`} fill="#cf2b2d" />
          <Pad x={855} y={y} w={51} h={17} />
          <path d={`M858 ${y + 3}h29v11h-29Z`} fill="#cf2b2d" />
        </g>
      ))}
      {edgePads.map(([y, n, net]) => <Pad key={y} x={975} y={y} w={59} h={31} n={n} net={net} />)}
      <Pad x={801} y={649} w={31} h={59} n="5" net="RST" turned />
      <Pad x={854} y={649} w={31} h={59} n="3" net="SCK" turned />
      <Pad x={907} y={649} w={31} h={59} n="1" net="MISO" turned />
      <Pad x={801} y={762} w={31} h={59} n="6" net="GND" turned />
      <Pad x={854} y={762} w={31} h={59} n="4" net="MOSI" turned />
      <Pad x={907} y={762} w={31} h={59} n="2" net="VCC" turned />
      <Pad x={979} y={711} w={45} h={31} n="1" net="VCC" />
      <Pad x={979} y={780} w={45} h={31} n="2" net="BTN" />
      <Pad x={592} y={659} w={37} h={52} n="3" net="GND" turned />
      <Pad x={687} y={659} w={37} h={52} n="1" net="BTN" turned />
      <Pad x={592} y={796} w={37} h={53} n="4" net="GND" turned />
      <Pad x={687} y={796} w={37} h={53} n="2" net="BTN" turned />

      <g stroke={WIRE}>
        {wires.map(([a, b, c, d]) => <path key={`${a},${b},${c}`} d={`M${a + 0.5} ${b + 0.5}L${c + 0.5} ${d + 0.5}`} />)}
        <path d="M610.500 712v84M705.500 712v84" />
        <path d="M1004 499v22" strokeWidth="2" />
      </g>
      {[
        [757, 364, 8], [889, 364, 8], [654, 536, 10], [654, 605, 10], [826, 509, 16], [1004, 509, 11],
        [869, 731, 19], [1001, 760, 8], [657, 754, 18],
      ].map(([x, y, r]) => <Cross key={`${x}-${y}`} x={x} y={y} r={r} color="#9cae3c" />)}
    </g>
  </svg>
);

const ChipLogo = () => (
  <svg width="17" height="16" viewBox="0 0 17 16" aria-hidden="true">
    <rect width="17" height="16" rx="2" fill="#1f8a43" />
    <path d="M6 2v12M8.500 2v12M11 2v12" stroke="#e8e23a" />
    <rect x="4.500" y="5" width="8" height="6" fill="#1f7a3a" stroke="#e8e23a" strokeWidth="1.500" />
  </svg>
);

const FusionLogo = () => (
  <svg width="17" height="16" viewBox="0 0 17 16" aria-hidden="true">
    <rect width="17" height="16" rx="2" fill="#f5a31f" />
    <path d="M4 4h9v8h-3V7H9v4H6V7H4Z" fill="#5a4a30" />
    <path d="M5 3.500h8V5H5Z" fill="#fff2d6" />
  </svg>
);

/* ---------- app ---------- */

export default function App() {
  return (
    <>
      <GlobalStyle />
      <Shell>
        <MenuBar>
          {menus.map((m) => <MenuItem key={m}>{m}</MenuItem>)}
        </MenuBar>

        <Toolbar role="toolbar" aria-label="Actions">
          <Grip />
          {toolGroups.map((group, i) => (
            <ToolGroup key={i} $last={i === toolGroups.length - 1}>
              {group.map((t) => <Tool key={t.name} {...t} />)}
            </ToolGroup>
          ))}
          <Divider />
          <Tool name="help" label="Help" />
          <Grip $wide />
          <CommandRow>
            {commands.map((c) => <Command key={c} $active={c === "Group"}>{c}</Command>)}
          </CommandRow>
          <More aria-label="More commands">»</More>
        </Toolbar>

        <Toolbar $light role="toolbar" aria-label="Parameters">
          <Grip />
          <ToolGroup $tight>
            <Tool name="layers" label="Layer settings" menu />
            <Tool name="grid" label="Grid" menu />
            <Tool name="filter" label="Selection filter" pressed />
          </ToolGroup>
          <LayerLabel>
            Layer:
            <LayerBox>
              <LayerSwatch />
              <LayerSelect defaultValue="1 Top">
                {layers.map((l) => <option key={l.label}>{l.label}</option>)}
              </LayerSelect>
              <Caret $inline />
            </LayerBox>
          </LayerLabel>
        </Toolbar>

        <Workspace>
          <Rail role="toolbar" aria-label="Drawing tools">
            <RailGrip />
            {rail.map((row) => (
              <RailRow key={row.tools[0]} $ruled={row.ruled}>
                {row.tools.map((t) => (
                  <Tool key={t} name={t} label={t} pressed={t === "group"} menu={row.menus?.includes(t)} />
                ))}
              </RailRow>
            ))}
          </Rail>

          <Side>
            <TabList role="tablist">
              <Tab role="tab">Design Manager</Tab>
              <Tab role="tab">Inspector</Tab>
              <Tab role="tab" aria-selected $on>Selection Filter</Tab>
            </TabList>
            <Pane>
              <PaneTitle>Types</PaneTitle>
              <ListFrame $size={259}>
                <List role="listbox" aria-label="Types" aria-multiselectable>
                  {Object.keys(typeIcons).map((t) => (
                    <ListItem key={t} role="option" aria-selected>
                      <svg width="16" height="16" viewBox="0 0 16 16" aria-hidden="true">{typeIcons[t]}</svg>
                      {t}
                    </ListItem>
                  ))}
                </List>
                <Track><Thumb $size={218} /></Track>
              </ListFrame>
              <PaneTitle $tall>Layers</PaneTitle>
              <ListFrame $size={127}>
                <PlainItem>&lt;All&gt;</PlainItem>
              </ListFrame>
              <Gap />
              <ListFrame>
                <List role="listbox" aria-label="Layers" aria-multiselectable>
                  {layers.map((l) => (
                    <ListItem key={l.label} role="option" aria-selected>
                      <Swatch $fill={l.fill} $edge={l.edge} $hatch={l.hatch} $lean={l.lean} $line={l.line} />
                      {l.label}
                    </ListItem>
                  ))}
                </List>
                <Track><Thumb $size={59} /></Track>
              </ListFrame>
            </Pane>
          </Side>

          <Editor>
            <CommandLine>
              <Coordinates>0.00625 inch (0.24018 -0.08519)</Coordinates>
              <CommandBox>
                <TextCursor />
                <CommandInput type="text" aria-label="Command" />
                <Caret $inline />
              </CommandBox>
            </CommandLine>
            <Stage>
              <Canvas>
                <BoardView><Board /></BoardView>
                <Dock>
                  <DockTab $long><ChipLogo />MANUFACTURING</DockTab>
                  <DockTab><FusionLogo />FUSION 360</DockTab>
                  <DockTab><FusionLogo />FUSION TEAM</DockTab>
                </Dock>
              </Canvas>
              <CanvasTrack><CanvasThumb /></CanvasTrack>
            </Stage>
          </Editor>
        </Workspace>
      </Shell>
    </>
  );
}
